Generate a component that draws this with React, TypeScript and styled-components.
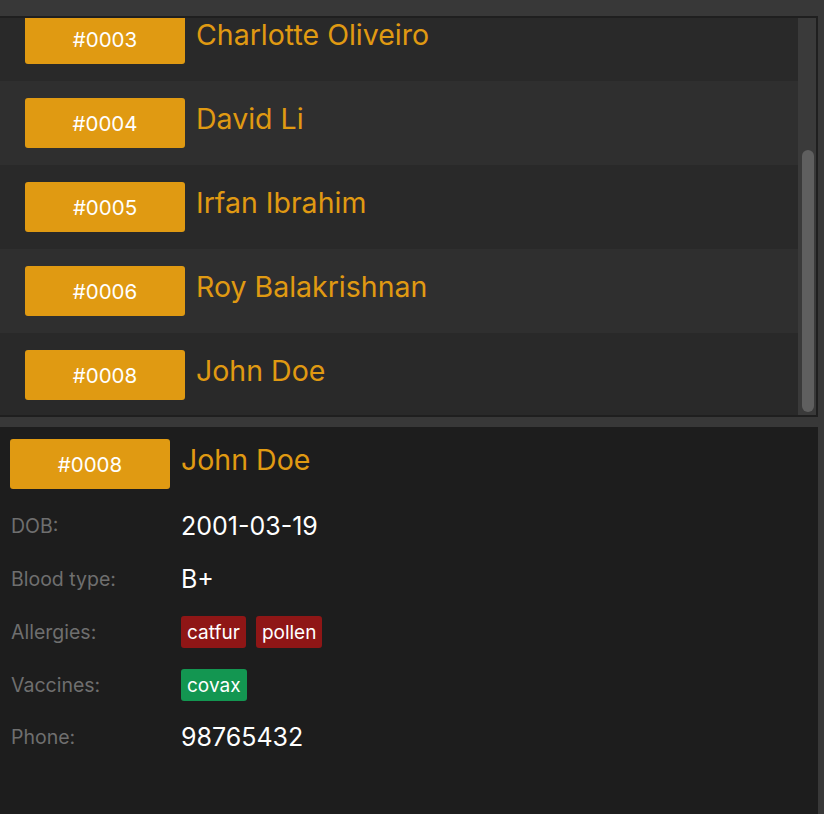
import React, { useLayoutEffect, useRef } from "react";
import styled, { createGlobalStyle } from "styled-components";

const Global = createGlobalStyle`
  html, body { margin: 0; padding: 0; background: #383838; }
  body { font-family: Inter, "Noto Sans", "Liberation Sans", sans-serif; }
  * { box-sizing: border-box; }
`;

const Page = styled.div`
  width: 824px;
  height: 814px;
  background: #383838;
  padding-top: 16px;
  display: flex;
  flex-direction: column;
  gap: 10px;
  overflow: hidden;
`;

const ListFrame = styled.div`
  width: 818px;
  height: 401px;
  border-top: 2px solid #1f1f1f;
  border-right: 2px solid #1f1f1f;
  border-bottom: 2px solid #1f1f1f;
  display: flex;
  flex-shrink: 0;
`;

const ListViewport = styled.div`
  flex: 1;
  height: 100%;
  overflow: hidden;
`;

const Row = styled.div<{ $alt: boolean }>`
  height: 84px;
  padding: 17px 0 17px 25px;
  display: flex;
  align-items: flex-start;
  gap: 11px;
  background: ${(p) => (p.$alt ? "#2f2f2f" : "#292929")};
`;

const IdBadge = styled.div`
  width: 160px;
  height: 50px;
  flex-shrink: 0;
  border-radius: 3px;
  background: #e09a12;
  color: #ffffff;
  font-size: 20.5px;
  display: flex;
  align-items: center;
  justify-content: center;
`;

const Name = styled.div`
  color: #e09a12;
  font-size: 28.5px;
  line-height: 34px;
  padding-top: 4px;
`;

const Track = styled.div`
  width: 18px;
  height: 100%;
  background: #3a3a3a;
  display: flex;
  flex-direction: column;
  justify-content: flex-end;
  padding: 0 2px 3px 4px;
`;

const Thumb = styled.div`
  height: 262px;
  border-radius: 6px;
  background: #5f5f5f;
`;

const Detail = styled.div`
  width: 818px;
  flex: 1;
  background: #1d1d1d;
  padding: 12px 10px 0 10px;
`;

const Header = styled.div`
  display: flex;
  align-items: flex-start;
  gap: 11px;
  margin-bottom: 11px;
`;

const Fields = styled.div`
  display: grid;
  grid-template-columns: 171px 1fr;
  grid-auto-rows: 52.75px;
  align-items: center;
`;

const Label = styled.div`
  color: #6f6f6f;
  font-size: 19.5px;
  padding-left: 1px;
`;

const Value = styled.div`
  color: #ffffff;
  font-size: 25px;
`;

const Tags = styled.div`
  display: flex;
  gap: 10px;
  padding-top: 1px;
`;

const Tag = styled.span<{ $kind: "allergy" | "vaccine" }>`
  height: 32px;
  padding: 0 6px;
  border-radius: 3px;
  display: inline-flex;
  align-items: center;
  color: #ffffff;
  font-size: 19px;
  background: ${(p) => (p.$kind === "allergy" ? "#8f1616" : "#139651")};
`;

const persons = [
  { id: "#0001", name: "Alex Yeoh" },
  { id: "#0002", name: "Bernice Yu" },
  { id: "#0003", name: "Charlotte Oliveiro" },
  { id: "#0004", name: "David Li" },
  { id: "#0005", name: "Irfan Ibrahim" },
  { id: "#0006", name: "Roy Balakrishnan" },
  { id: "#0008", name: "John Doe" },
];

export default function App() {
  const viewport = useRef<HTMLDivElement>(null);
  useLayoutEffect(() => {
    if (viewport.current) viewport.current.scrollTop = 189;
  }, []);

  return (
    <>
      <Global />
      <Page>
        <ListFrame>
          <ListViewport ref={viewport}>
            {persons.map((p, i) => (
              <Row key={p.id} $alt={i % 2 === 1}>
                <IdBadge>{p.id}</IdBadge>
                <Name>{p.name}</Name>
              </Row>
            ))}
          </ListViewport>
          <Track>
            <Thumb />
          </Track>
        </ListFrame>
        <Detail>
          <Header>
            <IdBadge>#0008</IdBadge>
            <Name>John Doe</Name>
          </Header>
          <Fields>
            <Label>DOB:</Label>
            <Value>2001-03-19</Value>
            <Label>Blood type:</Label>
            <Value>B+</Value>
            <Label>Allergies:</Label>
            <Tags>
              <Tag $kind="allergy">catfur</Tag>
              <Tag $kind="allergy">pollen</Tag>
            </Tags>
            <Label>Vaccines:</Label>
            <Tags>
              <Tag $kind="vaccine">covax</Tag>
            </Tags>
            <Label>Phone:</Label>
            <Value>98765432</Value>
          </Fields>
        </Detail>
      </Page>
    </>
  );
}
